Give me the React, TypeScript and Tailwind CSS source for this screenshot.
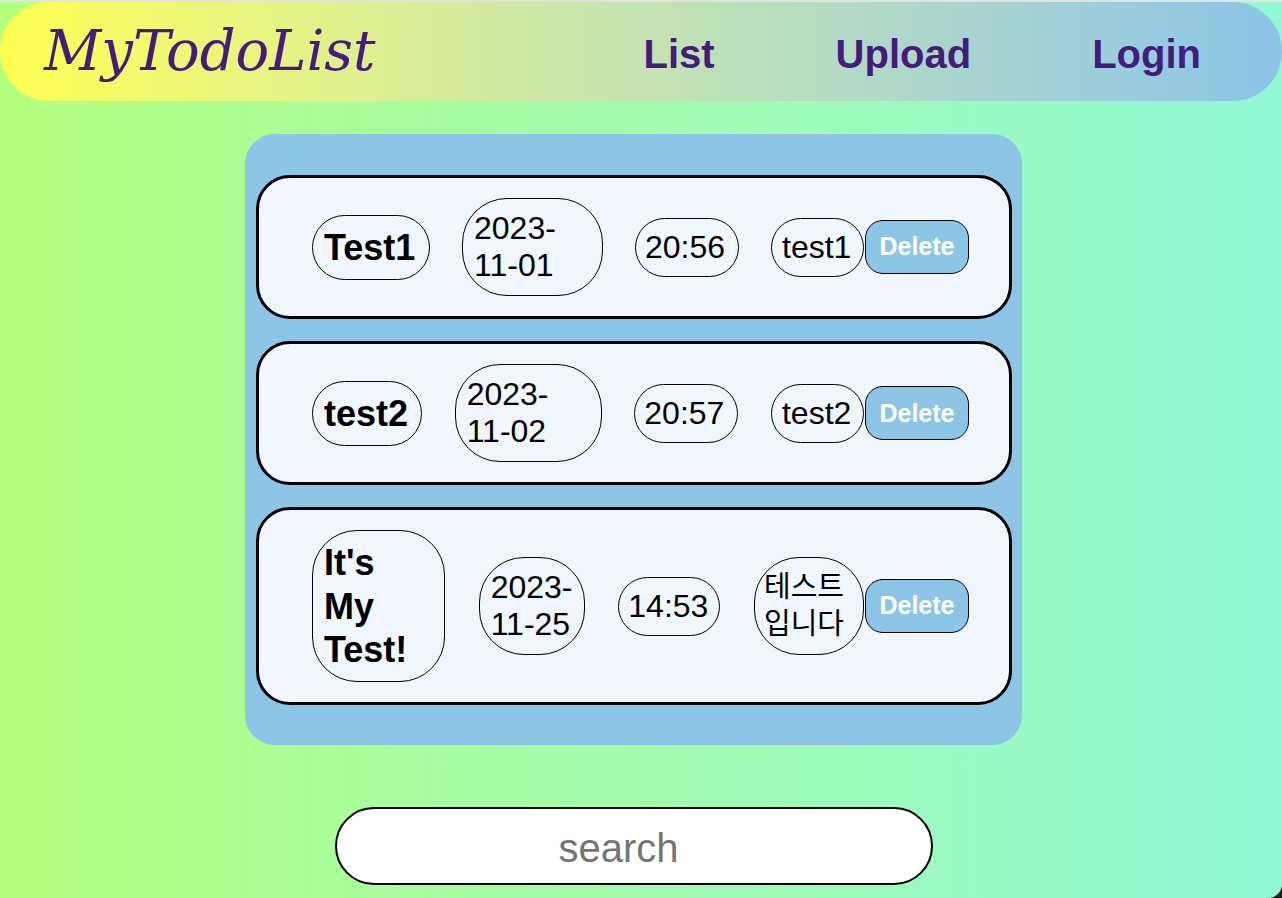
import React from "react";

type Todo = {
  title: string;
  date: string;
  time: string;
  content: string;
  w: [string, string, string, string];
  contentText?: string;
};

const TODOS: Todo[] = [
  { title: "Test1", date: "2023-11-01", time: "20:56", content: "test1", w: ["w-[118px]", "w-[141px]", "w-[104px]", "w-[93px]"] },
  { title: "test2", date: "2023-11-02", time: "20:57", content: "test2", w: ["w-[110px]", "w-[147px]", "w-[104px]", "w-[93px]"] },
  {
    title: "It's My Test!",
    date: "2023-11-25",
    time: "14:53",
    content: "테스트입니다",
    w: ["w-[133px]", "w-[106px]", "w-[102px]", "w-[110px]"],
    contentText: "text-[29px] leading-[1.28] px-[9px]",
  },
];

const pill = "shrink-0 border-[1.5px] border-black rounded-[45px] p-[11px] text-left break-words";

export default function App() {
  return (
    <div className="bg-[#1c1c1c] min-h-[898px]">
      <div
        className="min-h-[898px] rounded-br-[14px] bg-gradient-to-r from-[#b3ff7e] to-[#91f8d5] border-t-2 border-[#e2e2e2] text-black"
        style={{ fontFamily: '"Liberation Sans", Arial, "Noto Sans CJK KR", sans-serif' }}
      >
        <header className="h-[99px] rounded-full bg-gradient-to-r from-[#ffff4e] to-[#8cc4e8] flex items-center pl-[44px] pr-[81px]">
          <h1
            className="text-[56px] italic text-[#451b7b] leading-none flex-1 -mt-[2px]"
            style={{ fontFamily: '"DejaVu Serif", "Liberation Serif", serif' }}
          >
            MyTodoList
          </h1>
          <nav className="flex items-center gap-[121px] text-[40px] font-bold text-[#451b7b] mt-[4px]">
            <a>List</a>
            <a>Upload</a>
            <a>Login</a>
          </nav>
        </header>

        <main className="flex flex-col items-center pr-[15px]">
          <section className="mt-[33px] w-[777px] bg-[#8cc5e5] rounded-[30px] pt-[41px] pb-[40px] pl-[11px] pr-[10px] flex flex-col gap-[22px]">
            {TODOS.map((t) => (
              <div
                key={t.title}
                className="border-[3px] border-black rounded-[34px] bg-[#eff6fe] flex items-center justify-between pl-[53px] pr-[40px] py-[20px]"
              >
                <div className={`${pill} ${t.w[0]} text-[36px] font-bold leading-[1.2] py-[10px]`}>{t.title}</div>
                <div className={`${pill} ${t.w[1]} text-[32px] leading-[1.16]`}>{t.date}</div>
                <div className={`${pill} ${t.w[2]} text-[32px] leading-[1.16] px-[9px] py-[10px] whitespace-nowrap`}>{t.time}</div>
                <div className="flex items-center gap-[1px]">
                  <div className={`${pill} ${t.w[3]} ${t.contentText ?? "text-[32px] leading-[1.16] px-[10px] py-[10px]"}`}>
                    {t.content}
                  </div>
                  <button className="w-[104px] h-[54px] bg-[#8cc5e5] border-[1.5px] border-black rounded-[18px] text-white font-bold text-[25px]">
                    Delete
                  </button>
                </div>
              </div>
            ))}
          </section>

          <input
            placeholder="search"
            className="mt-[62px] w-[598px] h-[78px] bg-white border-2 border-black rounded-full text-center text-[40px] pr-[30px] pt-[4px] placeholder:text-[#757575] outline-none"
          />
        </main>
      </div>
    </div>
  );
}
